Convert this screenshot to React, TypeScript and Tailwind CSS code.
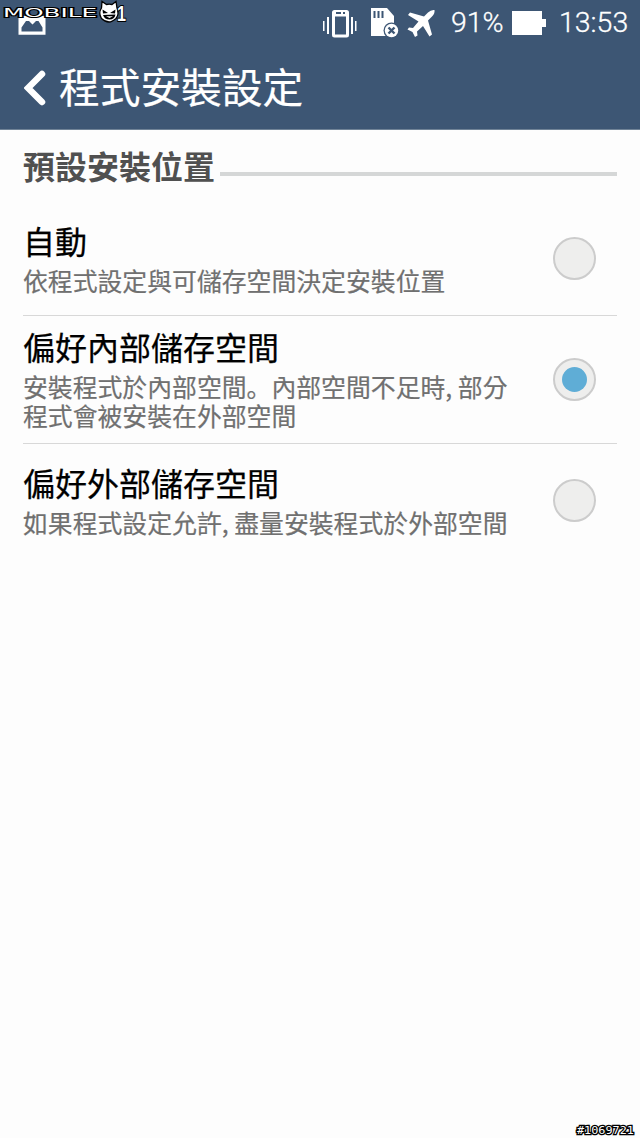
import clsx from "clsx";

type Option = {
  title: string;
  lines: React.ReactNode[];
  checked: boolean;
  rowClass: string;
  radioClass: string;
};

const options: Option[] = [
  {
    title: "自動",
    lines: ["依程式設定與可儲存空間決定安裝位置"],
    checked: false,
    rowClass: "h-[108px] pt-[12px] border-b",
    radioClass: "mt-[17px]",
  },
  {
    title: "偏好內部儲存空間",
    lines: [
      <>
        安裝程式於內部空間<span className="font-['Noto_Sans_CJK_SC',sans-serif]">。</span>
        內部空間不足時, 部分
      </>,
      "程式會被安裝在外部空間",
    ],
    checked: true,
    rowClass: "h-[128px] pt-[10px] border-b",
    radioClass: "mt-[32px]",
  },
  {
    title: "偏好外部儲存空間",
    lines: ["如果程式設定允許, 盡量安裝程式於外部空間"],
    checked: false,
    rowClass: "h-[120px] pt-[18px]",
    radioClass: "mt-[17px]",
  },
];

function Radio({ checked, className }: { checked: boolean; className: string }) {
  return (
    <div
      className={clsx(
        "flex size-[43px] shrink-0 items-center justify-center rounded-full border-2 border-[#cccccc] bg-[#eeeeed]",
        className
      )}
    >
      {checked && <div className="size-[25px] rounded-full bg-[#5fadd6]" />}
    </div>
  );
}

function Watermark() {
  return (
    <svg className="absolute left-0 top-0" width="130" height="28" viewBox="0 0 130 28">
      <text
        x="3"
        y="17"
        textLength="94"
        lengthAdjust="spacingAndGlyphs"
        fontSize="13"
        fontFamily="DejaVu Sans, sans-serif"
        fill="#fff"
        stroke="#000"
        strokeWidth="2"
        paintOrder="stroke"
      >
        MOBILE
      </text>
      {/* devil face */}
      <path
        d="M101.500 8 L102 1.500 L106.500 4.500 Q109 3.800 112 4.500 L116 1.500 L117 8 Q119.500 14 116 18.500 Q112 22 109 22 Q105 22 101.500 18.500 Q98 13 101.500 8Z"
        fill="#fff"
        stroke="#000"
        strokeWidth="1.300"
      />
      <path d="M102.500 9.500 L108 13 L103 13.500Z M115.500 9.500 L110 13 L115 13.500Z" fill="#000" />
      <path d="M103 15 L115.500 14.500 Q114.500 19.500 109.500 19.500 Q104.500 19.500 103 15Z" fill="#000" />
      <path d="M106 16.200h7L109.500 18z" fill="#fff" />
      <text
        x="117"
        y="21"
        fontSize="22"
        textLength="9"
        lengthAdjust="spacingAndGlyphs"
        fontFamily="Liberation Sans, sans-serif"
        fontWeight="bold"
        fill="#fff"
        stroke="#000"
        strokeWidth="2"
        paintOrder="stroke"
      >
        1
      </text>
    </svg>
  );
}

function StatusIcons() {
  return (
    <svg width="116" height="32" viewBox="322 6 116 32" className="shrink-0">
      {/* vibrate */}
      <g fill="#fff">
        <rect x="323" y="20" width="1.500" height="10" />
        <rect x="327" y="16" width="2" height="17" />
        <rect x="351" y="16" width="2" height="17" />
        <rect x="355" y="20" width="1.500" height="10" />
        <path
          fillRule="evenodd"
          d="M334.500 9h12q2.500 0 2.500 2.500v22.500q0 2.500-2.500 2.500h-12q-2.500 0-2.500-2.500v-22.500q0-2.500 2.500-2.500zM335 15.500v18h11v-18zM336 11v2h5v-2zM343 11v2h2v-2z"
        />
      </g>
      {/* sd card */}
      <path d="M371 7h16l7 8v20h-23z" fill="#fff" />
      <path d="M374.500 10v7M378.500 10v7M382.500 10v7" stroke="#3d5674" strokeWidth="2" />
      <circle cx="391.500" cy="29.500" r="8" fill="#3d5674" />
      <circle cx="391.500" cy="29.500" r="6.700" fill="#fff" />
      <path d="M388.500 26.500l6 6M394.500 26.500l-6 6" stroke="#3d5674" strokeWidth="2.400" />
      {/* airplane */}
      <path
        d="M434.500 9 Q431 8.500 428 11.500 L424 15.500 L410 11.500 L408 14 L418.500 20.500 L413 27 L409 26.500 L407.500 28.500 L412.500 31 L415 36 L417.500 34.500 L417 30.500 L423 25 L429.500 35.500 L432 33.500 L428 19.500 L432 15.500 Q435 12.500 434.500 9Z"
        fill="#fff"
      />
    </svg>
  );
}

export default function App() {
  return (
    <div className="relative h-[1138px] w-[640px] overflow-hidden bg-[#fdfdfd] font-['Noto_Sans_CJK_TC',sans-serif]">
      <header className="h-[130px] border-b border-[#708397] bg-[#3d5674] text-white">
        <div className="flex h-[46px] items-center pl-[18px]">
          <svg width="28" height="20" viewBox="18 13 28 20" className="mt-1">
            <path
              fillRule="evenodd"
              d="M18.500 14h27v18.800h-27zM21.500 29.500h21v-4l-4-6.500h-2.500l-3.500 3.500-3.500-3.500h-3l-4.500 6.500z"
              fill="#fff"
            />
          </svg>
          <div className="ml-[276px] flex items-center font-[Roboto,sans-serif] text-[28.5px] [-webkit-text-stroke:0.3px_white]">
            <StatusIcons />
            <span className="ml-[13px] w-[54px] whitespace-nowrap font-light">91%</span>
            <svg width="35" height="25" viewBox="0 0 35 25" className="ml-[7px] shrink-0">
              <path d="M0 0h30v8h4v8h-4v8H0z" fill="#fff" />
            </svg>
            <span className="ml-[12px] whitespace-nowrap font-light">13:53</span>
          </div>
        </div>
        <div className="flex h-[83px] items-center pl-6">
          <svg width="22" height="36" viewBox="0 0 22 36">
            <path d="M18 4L4 18l14 14" fill="none" stroke="#fff" strokeWidth="6.500" strokeLinecap="round" />
          </svg>
          <h1 className="-mt-[3px] ml-[13px] text-[40.7px] leading-[60px] [-webkit-text-stroke:0.2px_white]">
            程式安裝設定
          </h1>
        </div>
      </header>

      <main className="px-[23px]">
        <div className="flex h-[78px] items-start">
          <h2 className="mt-[12px] text-[32px] font-bold leading-[46px] text-[#505050]">預設安裝位置</h2>
          <div className="ml-[5px] mt-[42px] h-1 flex-1 bg-[#d5d7d7]" />
        </div>

        {options.map((option) => (
          <div
            key={option.title}
            className={clsx("flex items-start justify-between border-[#d8d8d8]", option.rowClass)}
          >
            <div>
              <h3 className="text-[32px] leading-[40px] text-black [-webkit-text-stroke:0.25px_black]">
                {option.title}
              </h3>
              <div className="mt-[6px] text-[24.85px] leading-[29px] text-[#707070] [-webkit-text-stroke:0.2px_#707070]">
                {option.lines.map((line, i) => (
                  <p key={i} className="whitespace-nowrap">
                    {line}
                  </p>
                ))}
              </div>
            </div>
            <Radio checked={option.checked} className={clsx("mr-[21px]", option.radioClass)} />
          </div>
        ))}
      </main>

      <Watermark />
      <svg className="absolute bottom-0 right-0" width="70" height="18" viewBox="0 0 70 18">
        <text
          x="7"
          y="14"
          textLength="57"
          lengthAdjust="spacingAndGlyphs"
          fontSize="11"
          fontFamily="DejaVu Sans Mono, monospace"
          fill="#fff"
          stroke="#000"
          strokeWidth="2.500"
          paintOrder="stroke"
        >
          #1069721
        </text>
      </svg>
    </div>
  );
}
